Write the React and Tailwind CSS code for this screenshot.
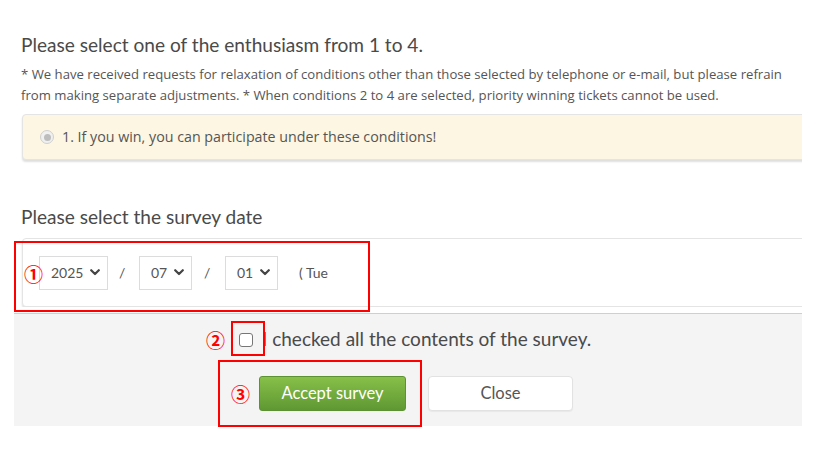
import React from "react";

const headFont = { fontFamily: "Lato, 'Noto Sans', sans-serif" };
const bodyFont = { fontFamily: "'Open Sans', 'Noto Sans', sans-serif" };
const markFont = { fontFamily: "'Noto Sans CJK JP', 'DejaVu Sans', sans-serif" };

function Chevron() {
  return (
    <svg viewBox="0 0 10 7" width="10" height="7">
      <path d="M1.2 1.2 L5 5 L8.8 1.2" fill="none" stroke="#444" strokeWidth="2.2" strokeLinecap="round" strokeLinejoin="round" />
    </svg>
  );
}

function FakeSelect({ value, width }) {
  return (
    <div className={`flex h-[34px] items-center justify-between border border-[#dcdcdc] bg-white pl-[11px] pr-[7px] text-[14px] text-[#555] ${width}`}>
      <span>{value}</span>
      <Chevron />
    </div>
  );
}

function Mark({ children, className = "" }) {
  return (
    <span className={`text-[19px] font-bold leading-none text-[#f00] ${className}`} style={markFont}>
      {children}
    </span>
  );
}

export default function App() {
  return (
    <div className="relative h-[454px] w-[827px] overflow-hidden bg-white text-[#4a4a4a]" style={headFont}>
      <div className="ml-[14px] w-[788px] overflow-hidden">
        {/* enthusiasm section */}
        <div className="pl-[7px] pt-[32px] text-[19.1px] leading-[26px] text-[#4a4a4a]">
          Please select one of the enthusiasm from 1 to 4.
        </div>
        <p className="mt-[6px] whitespace-nowrap pl-[7px] text-[13.15px] leading-[21px] text-[#555]" style={bodyFont}>
          * We have received requests for relaxation of conditions other than those selected by telephone or e-mail, but please refrain
          <br />
          from making separate adjustments. * When conditions 2 to 4 are selected, priority winning tickets cannot be used.
        </p>
        <div className="ml-[8px] mr-[-6px] mt-[8px] flex h-[46px] items-center rounded-[4px] border border-[#e4e4e4] bg-[#fdf6e2] pl-[17px] shadow-[0_2px_2px_rgba(0,0,0,0.13)]">
          <span className="flex h-[14px] w-[14px] items-center justify-center rounded-full border border-[#cfcfcf] bg-[#f0f0f0]">
            <span className="h-[7px] w-[7px] rounded-full bg-[#bdbdbd]" />
          </span>
          <span className="ml-[8px] text-[14.25px] text-[#555]" style={bodyFont}>
            1. If you win, you can participate under these conditions!
          </span>
        </div>

        {/* survey date section */}
        <div className="mt-[44px] pl-[7px] text-[19.1px] leading-[26px] text-[#4a4a4a]">
          Please select the survey date
        </div>
        <div className="relative ml-[8px] mr-[-6px] mt-[8px] flex h-[69px] items-center rounded-[4px] border border-[#e4e4e4] bg-white pl-[16px] shadow-[0_2px_2px_rgba(0,0,0,0.12)]">
          <FakeSelect value="2025" width="w-[69px]" />
          <span className="w-[31px] pl-[11px] text-[14px] text-[#555]">/</span>
          <FakeSelect value="07" width="w-[53px]" />
          <span className="w-[33px] pl-[12px] text-[14px] text-[#555]">/</span>
          <FakeSelect value="01" width="w-[53px]" />
          <span className="ml-[21px] text-[14px] text-[#555]">( Tue</span>
          <Mark className="absolute left-[1px] top-[25px]">①</Mark>
        </div>
      </div>

      {/* footer with confirmation and actions */}
      <div className="mt-[6px] ml-[14px] h-[113px] w-[788px] border-t border-[#cfcfcf] bg-[#f4f4f4]">
        <div className="flex h-[48px] items-center pl-[192px] pt-[3px]">
          <Mark>②</Mark>
          <span className="ml-[14px] h-[14px] w-[14px] rounded-[3px] border border-[#767676] bg-white" />
          <span className="ml-[9px] text-[19px] text-[#4a4a4a]">I checked all the contents of the survey.</span>
        </div>
        <div className="mt-[14px] flex items-center pl-[217px]">
          <Mark>③</Mark>
          <button className="ml-[9px] h-[35px] w-[147px] rounded-[3px] border border-[#5c9232] bg-gradient-to-b from-[#88c04a] to-[#5f9832] text-[16.5px] text-white">
            Accept survey
          </button>
          <button className="ml-[22px] h-[35px] w-[145px] rounded-[4px] border border-[#e2e2e2] bg-white text-[16.5px] text-[#555] shadow-[0_1px_1px_rgba(0,0,0,0.05)]">
            Close
          </button>
        </div>
      </div>

      {/* annotation frames */}
      <div className="pointer-events-none absolute left-[14px] top-[241px] h-[71px] w-[356px] border-2 border-[#f00]" />
      <div className="pointer-events-none absolute left-[231px] top-[321px] h-[35px] w-[34px] border-2 border-[#f00]" />
      <div className="pointer-events-none absolute left-[218px] top-[360px] h-[67px] w-[204px] border-2 border-[#f00]" />
    </div>
  );
}
